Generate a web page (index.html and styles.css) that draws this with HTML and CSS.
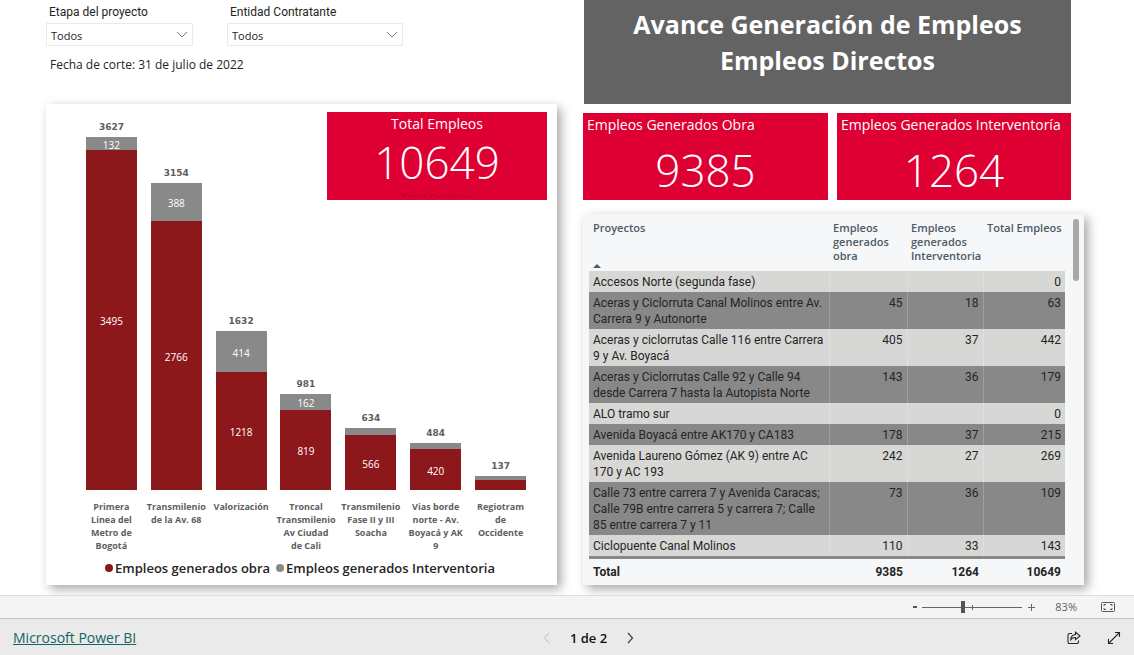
FILE: index.html
```html
<!DOCTYPE html>
<html lang="es">
<head>
<meta charset="utf-8">
<meta name="viewport" content="width=device-width, initial-scale=1">
<title>Avance Generación de Empleos</title>
<link rel="stylesheet" href="styles.css">
</head>
<body>
<div class="report">
  <main class="canvas">
    <section class="column">
      <div class="filters">
        <div class="filter">
          <label for="etapa">Etapa del proyecto</label>
          <div class="select-box">
            <select id="etapa"><option>Todos</option></select>
            <svg class="caret" viewBox="0 0 12 8" aria-hidden="true"><path d="M1 1l5 5 5-5"/></svg>
          </div>
        </div>
        <div class="filter filter-wide">
          <label for="entidad">Entidad Contratante</label>
          <div class="select-box">
            <select id="entidad"><option>Todos</option></select>
            <svg class="caret" viewBox="0 0 12 8" aria-hidden="true"><path d="M1 1l5 5 5-5"/></svg>
          </div>
        </div>
      </div>
      <p class="cutoff">Fecha de corte: 31 de julio de 2022</p>
      <div class="card chart">
        <div class="bars">
          <div class="bar"><b>3627</b><span class="seg inter" style="height:13px">132</span><span class="seg obra" style="height:340px">3495</span></div>
          <div class="bar"><b>3154</b><span class="seg inter" style="height:38px">388</span><span class="seg obra" style="height:269px">2766</span></div>
          <div class="bar"><b>1632</b><span class="seg inter" style="height:41px">414</span><span class="seg obra" style="height:118px">1218</span></div>
          <div class="bar"><b>981</b><span class="seg inter" style="height:16px">162</span><span class="seg obra" style="height:80px">819</span></div>
          <div class="bar"><b>634</b><span class="seg inter" style="height:7px"></span><span class="seg obra" style="height:55px">566</span></div>
          <div class="bar"><b>484</b><span class="seg inter" style="height:6px"></span><span class="seg obra" style="height:41px">420</span></div>
          <div class="bar"><b>137</b><span class="seg inter" style="height:4px"></span><span class="seg obra" style="height:10px"></span></div>
        </div>
        <div class="axis">
          <span>Primera<br>Linea del<br>Metro de<br>Bogotá</span>
          <span>Transmilenio<br>de la Av. 68</span>
          <span>Valorización</span>
          <span>Troncal<br>Transmilenio<br>Av Ciudad<br>de Cali</span>
          <span>Transmilenio<br>Fase II y III<br>Soacha</span>
          <span>Vias borde<br>norte - Av.<br>Boyacá y AK<br>9</span>
          <span>Regiotram<br>de<br>Occidente</span>
        </div>
        <div class="legend">
          <span class="key"><i class="dot obra"></i>Empleos generados obra</span>
          <span class="key"><i class="dot inter"></i>Empleos generados Interventoria</span>
        </div>
        <div class="tile total-tile">
          <h2>Total Empleos</h2>
          <strong>10649</strong>
          <small>Total Empleos</small>
        </div>
      </div>
    </section>

    <section class="column">
      <h1 class="title">Avance Generación de Empleos<br>Empleos Directos</h1>
      <div class="tiles">
        <div class="tile"><h2>Empleos Generados Obra</h2><strong>9385</strong></div>
        <div class="tile"><h2>Empleos Generados Interventoría</h2><strong>1264</strong></div>
      </div>
      <div class="card table-card">
        <table>
          <colgroup><col class="c-name"><col class="c-obra"><col class="c-inter"><col class="c-total"></colgroup>
          <thead>
            <tr><th>Proyectos<svg class="sort" viewBox="0 0 8 4" aria-hidden="true"><path d="M0 4L4 0l4 4z"/></svg></th><th>Empleos generados obra</th><th>Empleos generados Interventoria</th><th>Total Empleos</th></tr>
          </thead>
          <tbody>
            <tr><td>Accesos Norte (segunda fase)</td><td></td><td></td><td>0</td></tr>
            <tr><td>Aceras y Ciclorruta Canal Molinos entre Av.<br>Carrera 9 y Autonorte</td><td>45</td><td>18</td><td>63</td></tr>
            <tr><td>Aceras y ciclorrutas Calle 116 entre Carrera<br>9 y Av. Boyacá</td><td>405</td><td>37</td><td>442</td></tr>
            <tr><td>Aceras y Ciclorrutas Calle 92 y Calle 94<br>desde Carrera 7 hasta la Autopista Norte</td><td>143</td><td>36</td><td>179</td></tr>
            <tr><td>ALO tramo sur</td><td></td><td></td><td>0</td></tr>
            <tr><td>Avenida Boyacá entre AK170 y CA183</td><td>178</td><td>37</td><td>215</td></tr>
            <tr><td>Avenida Laureno Gómez (AK 9) entre AC<br>170 y AC 193</td><td>242</td><td>27</td><td>269</td></tr>
            <tr><td>Calle 73 entre carrera 7 y Avenida Caracas;<br>Calle 79B entre carrera 5 y carrera 7; Calle<br>85 entre carrera 7 y 11</td><td>73</td><td>36</td><td>109</td></tr>
            <tr><td>Ciclopuente Canal Molinos</td><td>110</td><td>33</td><td>143</td></tr>
          </tbody>
          <tfoot>
            <tr><td>Total</td><td>9385</td><td>1264</td><td>10649</td></tr>
          </tfoot>
        </table>
        <div class="scroll"><div class="thumb"></div></div>
      </div>
    </section>
  </main>

  <div class="zoombar">
    <button type="button" aria-label="Alejar"><svg width="6" height="12" viewBox="0 0 6 12"><path d="M1 6h4" stroke="#555" stroke-width="2"/></svg></button>
    <input class="zoom" type="range" min="0" max="100" value="40" aria-label="Zoom">
    <button type="button" aria-label="Acercar"><svg width="8" height="12" viewBox="0 0 8 12"><path d="M0 6.500h7M3.500 3v7" stroke="#666"/></svg></button>
    <span class="percent">83%</span>
    <button type="button" aria-label="Ajustar a la página"><svg width="15" height="12" viewBox="0 0 15 12" fill="none" stroke="#5a5a5a"><rect x=".5" y="1.500" width="13" height="9" rx="1"/><path d="M3 5V3.500h2M9 3.500h2V5M11 7v1.500H9M5 8.500H3V7"/></svg></button>
  </div>
  <footer class="footer">
    <a href="#">Microsoft Power BI</a>
    <nav class="pager">
      <button type="button" aria-label="Anterior" disabled><svg width="8" height="12" viewBox="0 0 8 12" fill="none" stroke="#bdbdbd"><path d="M6 1L1.500 6 6 11"/></svg></button>
      <span>1 de 2</span>
      <button type="button" aria-label="Siguiente"><svg width="8" height="12" viewBox="0 0 8 12" fill="none" stroke="#444" stroke-width="1.200"><path d="M2 1l4.500 5L2 11"/></svg></button>
    </nav>
    <div class="actions">
      <button type="button" aria-label="Compartir"><svg width="14" height="14" viewBox="0 0 14 14" fill="none" stroke="#2b2230" stroke-width="1.100"><path d="M5 2.500H2.500a1.500 1.500 0 0 0-1.500 1.500v7a1.500 1.500 0 0 0 1.500 1.500h7.500a1.500 1.500 0 0 0 1.500-1.500V9.500"/><path d="M8.500 1.200L13 5 8.500 8.700V6.500C6.500 6.400 5 7 3.800 8.600 4 5.500 5.800 3.700 8.500 3.500z"/></svg></button>
      <button type="button" aria-label="Pantalla completa"><svg width="14" height="14" viewBox="0 0 14 14" fill="none" stroke="#2b2230" stroke-width="1.100"><path d="M1.500 12.500l11-11M8 1.500h4.500V6M1.500 8v4.500H6"/></svg></button>
    </div>
  </footer>
</div>
</body>
</html>
```

FILE: styles.css
```css
* { box-sizing: border-box; }

body {
  margin: 0;
  font-family: "Open Sans", "Noto Sans", sans-serif;
  font-size: 12px;
  line-height: 16px;
  color: #252423;
  background: #fff;
}

h1, h2, p { margin: 0; }

button {
  display: flex;
  padding: 0;
  border: 0;
  background: none;
}

.report {
  display: flex;
  flex-direction: column;
  min-height: 100vh;
}

.canvas {
  flex: 1;
  display: grid;
  grid-template-columns: minmax(0, 511fr) minmax(0, 501fr);
  gap: 26px;
  padding: 0 50px 10px 46px;
  overflow: hidden;
}

.column {
  display: flex;
  flex-direction: column;
}

/* Filters */
.filters {
  display: flex;
  gap: 34px;
  padding-top: 4px;
}

.filter { width: 147px; }
.filter-wide { width: 176px; }

.filter label {
  display: block;
  padding-left: 3px;
  font-family: Roboto, sans-serif;
  font-size: 12px;
}

.select-box {
  position: relative;
  margin-top: 3px;
}

.select-box select {
  display: block;
  width: 100%;
  height: 23px;
  padding: 2px 4px 0;
  appearance: none;
  border: 1px solid #eaeaea;
  border-radius: 0;
  background: #fff;
  color: #252423;
  font: 11px "Open Sans", sans-serif;
}

.caret {
  position: absolute;
  top: 8px;
  right: 5px;
  width: 12px;
  height: 8px;
  fill: none;
  stroke: #667a8c;
  pointer-events: none;
}

.cutoff { padding: 11px 4px 31px; }

/* Cards */
.card {
  position: relative;
  background: #fff;
  box-shadow: 4px 4px 10px rgba(0, 0, 0, 0.35);
}

.chart {
  flex: 1;
  padding: 13px 24px 7px 33px;
}

.bars, .axis {
  display: grid;
  grid-template-columns: repeat(7, minmax(0, 1fr));
}

.bars {
  height: 373px;
  align-items: end;
}

.bar {
  display: flex;
  flex-direction: column;
  align-items: center;
}

.bar b {
  margin-bottom: 3px;
  color: #605e5c;
  font: bold 9px/14px "DejaVu Sans", sans-serif;
}

.seg {
  display: flex;
  align-items: center;
  justify-content: center;
  width: 51px;
  padding-top: 2px;
  color: #fff;
  font-size: 10px;
  line-height: 12px;
}

.obra { background: #8d181b; }
.inter { background: #898989; }

.axis {
  padding-top: 10px;
  min-height: 68px;
  color: #605e5c;
  font-size: 9px;
  font-weight: 700;
  line-height: 13px;
  text-align: center;
  white-space: nowrap;
}

.axis span {
  display: flex;
  justify-content: center;
}

.legend {
  display: flex;
  justify-content: center;
  gap: 6px;
  margin-right: 12px;
  font-size: 13px;
  font-weight: 600;
  line-height: 20px;
}

.key {
  display: flex;
  align-items: center;
  gap: 2px;
  white-space: nowrap;
}

.dot {
  width: 8px;
  height: 8px;
  border-radius: 50%;
}

/* Indicator tiles */
.tile {
  height: 87px;
  background: #de0033;
  color: #fff;
  text-align: center;
  overflow: hidden;
}

.tile h2 {
  padding: 2px 4px;
  font-size: 14px;
  font-weight: 400;
  line-height: 20px;
  text-align: left;
  white-space: nowrap;
}

.tile strong {
  display: block;
  font-size: 44px;
  font-weight: 300;
  line-height: 66px;
}

.total-tile {
  position: absolute;
  top: 8px;
  right: 10px;
  width: 220px;
  height: 88px;
}

.total-tile h2 { text-align: center; }
.total-tile strong { line-height: 52px; }

.total-tile small {
  display: block;
  height: 7px;
  margin-top: 2px;
  overflow: hidden;
  color: #8d181b;
  font-size: 11px;
  line-height: 16px;
}

.title {
  height: 104px;
  margin: 0 13px 0 1px;
  padding-top: 6px;
  background: #636363;
  color: #fff;
  font-size: 25px;
  font-weight: 700;
  line-height: 36px;
  text-align: center;
  white-space: nowrap;
}

.tiles {
  display: grid;
  grid-template-columns: minmax(0, 245fr) minmax(0, 234fr);
  gap: 9px;
  margin: 9px 13px 14px 0;
}

/* Projects table */
.table-card {
  flex: 1;
  display: flex;
  align-items: flex-start;
  gap: 8px;
  padding: 5px 5px 0 6px;
  background: #f5f7f9;
}

table {
  flex: 1;
  table-layout: fixed;
  width: 100%;
  border-collapse: collapse;
}

.c-obra { width: 78px; }
.c-inter { width: 76px; }
.c-total { width: 82px; }

th {
  height: 52px;
  padding: 2px 4px 0;
  color: #4d5a66;
  font-size: 11px;
  font-weight: 600;
  line-height: 14px;
  text-align: left;
  vertical-align: top;
}

th:last-child {
  text-align: right;
  white-space: nowrap;
}

.sort {
  display: block;
  width: 8px;
  height: 4px;
  margin-top: 29px;
  fill: #4d5a66;
}

td {
  padding: 3px 4px 2px;
  font-family: Roboto, sans-serif;
  text-align: right;
  vertical-align: top;
  white-space: nowrap;
}

td:first-child { text-align: left; }

tbody tr { background: #d7d7d5; }
tbody tr:nth-child(even) { background: #888; }
tbody td + td { border-left: 1px solid rgba(255, 255, 255, 0.2); }
tbody tr:last-child { border-bottom: 3px solid #888; }

tfoot td {
  padding-top: 5px;
  font-weight: 700;
}

.scroll {
  width: 6px;
}

.thumb {
  height: 62px;
  border-radius: 3px;
  background: #a8a8a8;
}

/* Zoom bar */
.zoombar {
  display: flex;
  align-items: center;
  justify-content: flex-end;
  height: 23px;
  padding-right: 18px;
  border-top: 1px solid #dcdcdc;
  background: #f4f4f4;
}

.zoom {
  width: 100px;
  height: 12px;
  margin: 0 6px 0 4px;
  appearance: none;
  background:
    linear-gradient(#666, #666) 50px 4px / 1px 5px no-repeat,
    linear-gradient(#666, #666) 0 6px / 100% 1px no-repeat;
}

.zoom::-webkit-slider-thumb {
  appearance: none;
  width: 4px;
  height: 12px;
  background: #555;
}

.percent {
  margin: 0 24px 0 19px;
  color: #605e5c;
  font-size: 11px;
}

/* Footer */
.footer {
  display: grid;
  grid-template-columns: 528fr auto 485fr;
  align-items: center;
  height: 37px;
  padding: 2px 13px 0;
  border-top: 1px solid #c4c4c4;
  background: #eaeaea;
  font-size: 13px;
}

.footer a {
  color: #13655f;
  font-size: 14px;
}

.pager {
  display: flex;
  align-items: center;
  gap: 19px;
  color: #111;
  font-weight: 600;
}

.actions {
  display: flex;
  justify-content: flex-end;
  gap: 26px;
}
```
